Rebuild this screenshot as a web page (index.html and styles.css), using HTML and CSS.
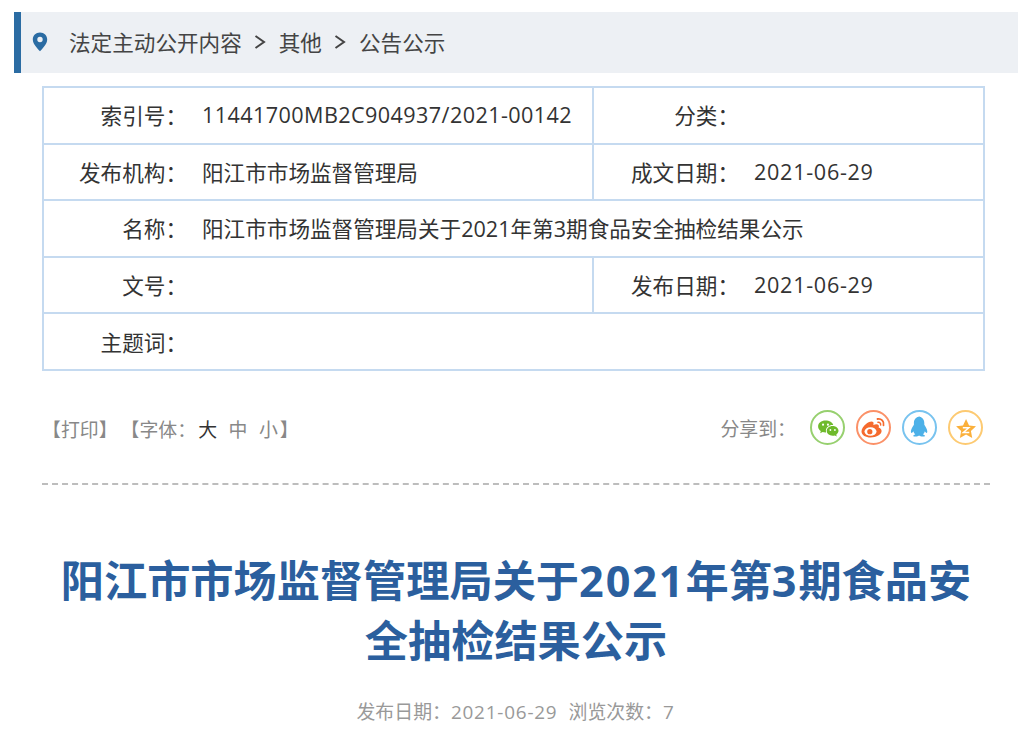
FILE: index.html
```html
<!DOCTYPE html>
<html lang="zh-CN">
<head>
<meta charset="utf-8">
<title>公告公示</title>
<link rel="stylesheet" href="styles.css">
</head>
<body>
<nav class="crumb">
  <svg class="pin" width="16" height="20" viewBox="0 0 16 20"><path fill="#2b6ca3" fill-rule="evenodd" d="M8 0.5C3.8 0.5 0.8 3.6 0.8 7.4 0.8 12 5.6 16.4 8 19.2 10.4 16.4 15.2 12 15.2 7.4 15.2 3.6 12.2 0.5 8 0.5ZM8 4.8A2.7 2.7 0 1 1 8 10.2 2.7 2.7 0 1 1 8 4.8Z"/></svg>
  <span class="crumb-item">法定主动公开内容</span>
  <svg class="chev" width="12" height="16" viewBox="0 0 12 16"><path fill="none" stroke="#444" stroke-width="2" d="M1.500 2 10 8 1.500 14"/></svg>
  <span class="crumb-item">其他</span>
  <svg class="chev" width="12" height="16" viewBox="0 0 12 16"><path fill="none" stroke="#444" stroke-width="2" d="M1.500 2 10 8 1.500 14"/></svg>
  <span class="crumb-item">公告公示</span>
</nav>
<table class="info">
  <colgroup><col class="c1"><col class="c2"><col class="c3"><col class="c4"></colgroup>
  <tr><th>索引号：</th><td class="code">11441700MB2C904937/2021-00142</td><th>分类：</th><td></td></tr>
  <tr><th>发布机构：</th><td>阳江市市场监督管理局</td><th>成文日期：</th><td class="date">2021-06-29</td></tr>
  <tr><th>名称：</th><td colspan="3">阳江市市场监督管理局关于2021年第3期食品安全抽检结果公示</td></tr>
  <tr><th>文号：</th><td></td><th>发布日期：</th><td class="date">2021-06-29</td></tr>
  <tr><th>主题词：</th><td colspan="3"></td></tr>
</table>
<div class="tools">
  <div class="font-tools">
    <span>【打印】</span>
    <span class="font-set">【字体：<b class="size on">大</b><b class="size">中</b><b class="size">小</b>】</span>
  </div>
  <div class="share">
    <span class="share-label">分享到：</span>
    <span class="ico wx"><svg width="35" height="35" viewBox="-4.400 -4.900 42.700 42.700">
      <path fill="#6fba2c" d="M14.500 8C9.300 8 5.500 11.200 5.500 15.200c0 2.400 1.300 4.200 3.300 5.600L8 23.500l3-1.500c1.100.3 2.200.5 3.500.5h.8c-.2-.7-.3-1.300-.3-2 0-3.900 3.600-7 8.300-7h.7C23.200 10.300 19.300 8 14.500 8Z"/>
      <path fill="#6fba2c" d="M23.300 14.500c-4.300 0-7.300 2.800-7.300 6s3 6 7.300 6c.9 0 1.800-.1 2.600-.4l2.400 1.300-.7-2.200c1.700-1.200 2.800-2.900 2.800-4.700 0-3.200-3-6-7.100-6Z"/>
      <circle cx="11.500" cy="13" r="1.300" fill="#fff"/><circle cx="17.500" cy="13" r="1.300" fill="#fff"/>
      <circle cx="20.500" cy="19.500" r="1.100" fill="#fff"/><circle cx="26" cy="19.500" r="1.100" fill="#fff"/>
    </svg></span>
    <span class="ico wb"><svg width="35" height="35" viewBox="0 -0.500 35 35">
      <path fill="#f56a2e" d="M14.500 27C9.800 27 5.500 24.800 5.500 21c0-2.600 2-5.400 4.800-7.700 2.800-2.300 5.600-3 6.800-1.800.6.600.6 1.700.2 3 2.400-1 4.600-1 5.400.2.400.7.300 1.500-.1 2.400 1.500.5 3 1.500 3 3.400C25.600 24 20.600 27 14.500 27Z"/>
      <ellipse cx="14.500" cy="21" rx="6" ry="4.300" fill="#fff"/>
      <circle cx="13.800" cy="21.200" r="2.600" fill="#f56a2e"/>
      <path fill="none" stroke="#f56a2e" stroke-width="1.800" stroke-linecap="round" d="M21.500 8.500c3.800-.7 6.900 2.400 6 6.300"/>
      <path fill="none" stroke="#f56a2e" stroke-width="1.500" stroke-linecap="round" d="M22 11.800c1.700-.3 3 1.100 2.600 2.700"/>
    </svg></span>
    <span class="ico qq"><svg width="35" height="35" viewBox="-0.600 0 35 35">
      <path fill="#4db1e8" d="M17.500 6.500c-4 0-6.200 3-6.200 6.500v1.700c-1.500 2.200-3 4.700-3 6.800 0 1.400.7 1.600 1.200 1.200.5-.3 1-1 1.300-1.500.3 1.200 1 2.300 1.900 3-1.200.5-2 1.100-2 1.700 0 .7 2 .8 3.500.6 1-.1 2-.6 2.300-.9.300.3 1.300.8 2.300.9 1.500.2 3.500.1 3.500-.6 0-.6-.8-1.200-2-1.700.9-.7 1.600-1.800 1.900-3 .3.5.8 1.200 1.300 1.500.5.400 1.200.2 1.200-1.200 0-2.100-1.500-4.600-3-6.800V13c0-3.500-2.200-6.500-6.200-6.500Z"/>
    </svg></span>
    <span class="ico qz"><svg width="35" height="35" viewBox="-2.100 -3.300 38 38">
      <path fill="#fbb03b" d="M17.500 6.500 20.800 13.400 28.300 14.400 22.800 19.600 24.200 27 17.500 23.400 10.800 27 12.200 19.600 6.700 14.400 14.200 13.400Z"/>
      <path fill="none" stroke="#fff" stroke-width="1.600" d="M14 16h6.500L14.500 21.200H21"/>
    </svg></span>
  </div>
</div>
<hr class="rule">
<h1 class="title">阳江市市场监督管理局关于<span class="num">2021</span>年第<span class="num">3</span>期食品安<br>全抽检结果公示</h1>
<p class="meta"><span>发布日期：<span class="num">2021-06-29</span></span><span>浏览次数：<span class="num">7</span></span></p>
</body>
</html>
```
FILE: styles.css
```css
* { box-sizing: border-box; }
html, body { margin: 0; padding: 0; background: #fff; }
body {
  height: 742px;
  overflow: hidden;
  font-family: "Open Sans", "Noto Sans CJK SC", sans-serif;
  color: #333;
}
.crumb {
  display: flex;
  align-items: center;
  height: 61px;
  margin: 12px 6px 0 14px;
  padding: 0 0 2px 11px;
  background: #edf0f4;
  border-left: 7px solid #2b6ca3;
  font-size: 21.600px;
  color: #444;
}
.pin { margin: 0 21px 0 0; }
.chev { margin: 0 13px 0 12px; }
.info {
  width: 943px;
  margin: 13px 0 0 42px;
  border-collapse: collapse;
  table-layout: fixed;
  font-size: 21.600px;
  color: #333;
}
.c1 { width: 159px; }
.c2 { width: 391px; }
.c3 { width: 161px; }
.info tr { height: 56.600px; }
.info th, .info td {
  border: 2px solid #c5daf0;
  padding: 0 0 1px;
  font-weight: 400;
  white-space: nowrap;
}
.info th {
  text-align: right;
  padding-right: 15px;
  border-right: 0;
}
.info td { border-left: 0; }
.info tr > td:nth-child(2) { border-right: 2px solid #c5daf0; }
.code { letter-spacing: .41px; }
.date { letter-spacing: .7px; }
.tools {
  display: flex;
  justify-content: space-between;
  align-items: center;
  height: 36px;
  margin: 40px 0 0 42px;
  width: 941px;
  font-size: 18.900px;
  color: #888;
}
.font-tools { display: flex; gap: 3px; }
.size { font-weight: 400; }
.size.on { margin-left: 2px; color: #333; }
.size + .size { margin-left: 11.500px; }
.size:last-child { margin-right: 2px; }
.share { display: flex; align-items: center; gap: 11px; margin-top: -2px; }
.share-label { margin-right: 3px; }
.ico { display: block; width: 35px; height: 35px; border: 2px solid; border-radius: 50%; overflow: hidden; }
.ico svg { display: block; margin: -2px; }
.wx { border-color: #97d06f; }
.wb { border-color: #fb9168; }
.qq { border-color: #78c3ef; }
.qz { border-color: #fdca72; }
.rule {
  width: 948px;
  height: 0;
  margin: 36px 0 0 42px;
  border: 0;
  border-top: 2px dashed #bdbdbd;
}
.title {
  width: 924px;
  margin: 66px 0 0 54px;
  font-size: 43.200px;
  line-height: 60px;
  font-weight: 700;
  text-align: center;
  color: #2b5f9e;
}
.title .num { letter-spacing: 1.900px; }
.meta {
  display: flex;
  justify-content: center;
  gap: 11px;
  margin: 26px 0 0;
  padding-left: 7px;
  font-size: 18.900px;
  color: #999;
}
.meta .num { letter-spacing: .8px; }
```
